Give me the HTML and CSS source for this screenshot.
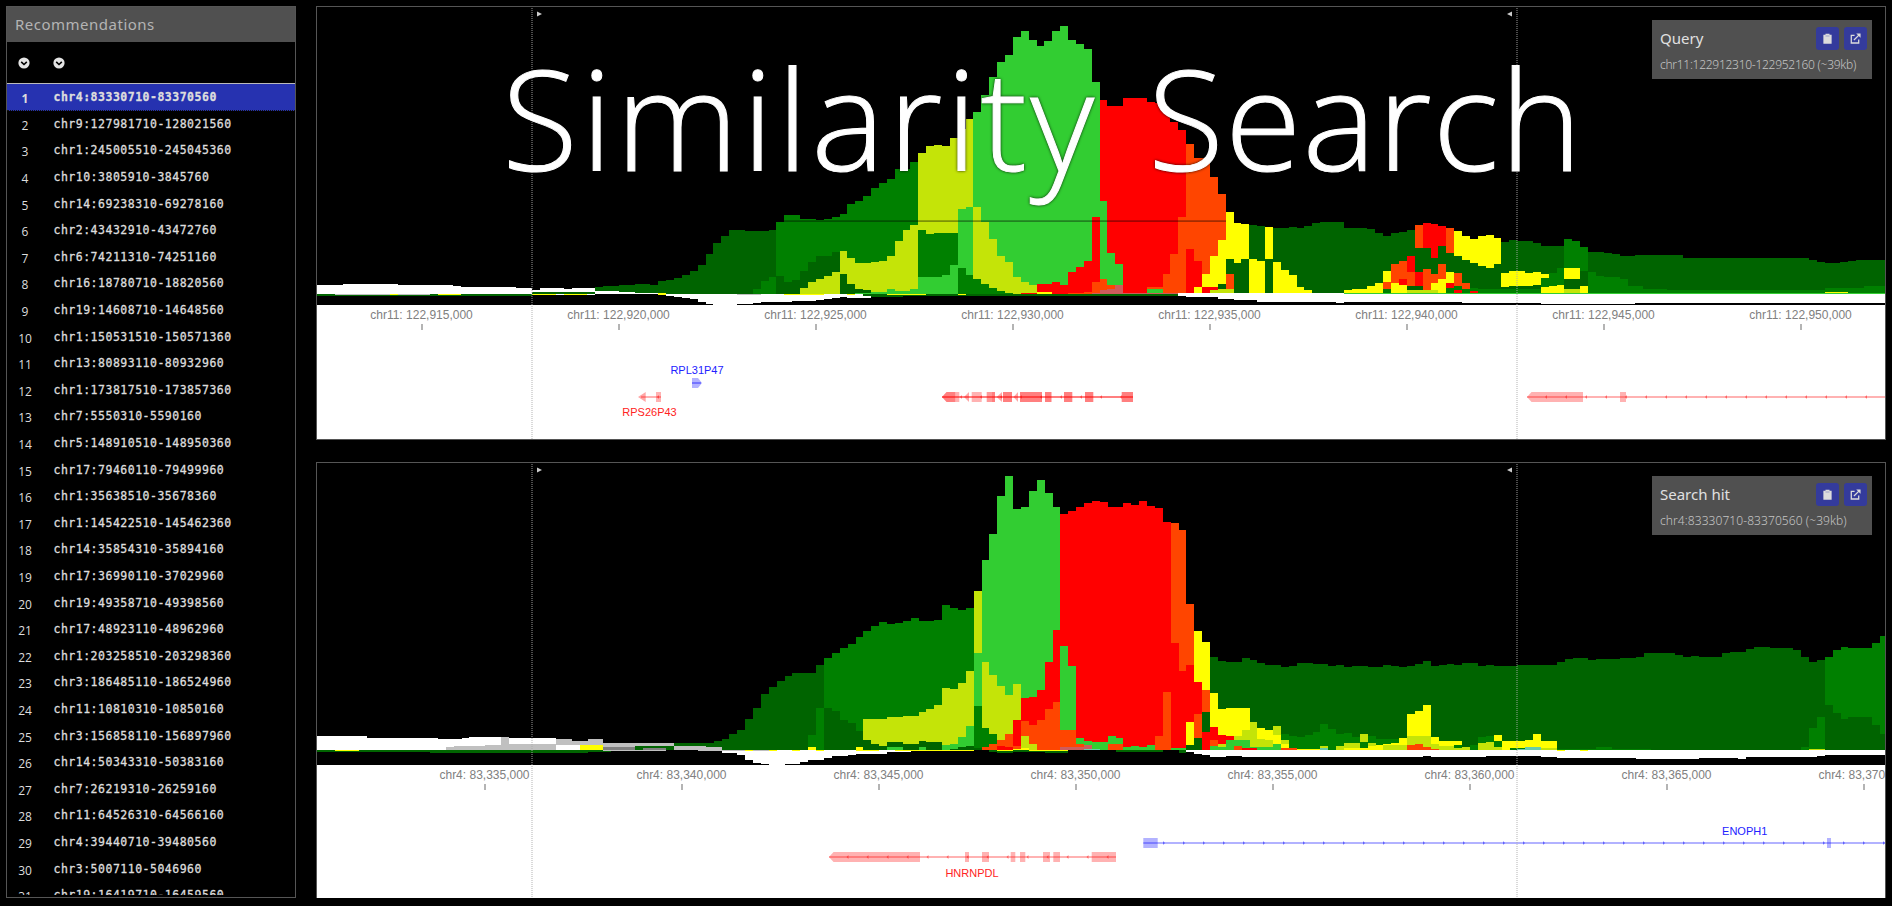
FILE: index.html
```
<!DOCTYPE html>
<html lang="en">
<head>
<meta charset="utf-8">
<title>Similarity Search</title>
<link rel="stylesheet" href="styles.css">
</head>
<body>
<div class="app">
  <aside class="sidebar">
    <h2 class="sidebar-title">Recommendations</h2>
    <div class="sort-row">
      <svg class="sort" viewBox="0 0 12 12"><circle cx="6" cy="6" r="5.6"/><path d="M3.2 4.8 6 7.5 8.8 4.8"/></svg>
      <svg class="sort" viewBox="0 0 12 12"><circle cx="6" cy="6" r="5.6"/><path d="M3.2 4.8 6 7.5 8.8 4.8"/></svg>
    </div>
    <div class="list" id="list"></div>
  </aside>
  <main class="panels">
    <section class="panel panel-query">
      <svg class="track" id="query" viewBox="317 7 1568 432"></svg>
      <div class="info">
        <div class="info-head">
          <span class="info-title">Query</span>
          <button class="btn"><svg viewBox="0 0 12 12"><path class="fill" d="M1.5 2h2.3V.8h4.4V2h2.3v9.6h-9z"/><path class="cut" d="M3.8 3.3h4.4"/></svg></button>
          <button class="btn"><svg viewBox="0 0 12 12"><path class="line" d="M5 2.5H1.4v8.4h8.1V7"/><path class="line" d="M4.3 7.7 10 2"/><path class="fill" d="M6.8.6h4.7v4.7z"/></svg></button>
        </div>
        <div class="info-sub sub-query">chr11:122912310-122952160 (~39kb)</div>
      </div>
    </section>
    <section class="panel panel-hit">
      <svg class="track" id="hit" viewBox="317 463 1568 435"></svg>
      <div class="info">
        <div class="info-head">
          <span class="info-title">Search hit</span>
          <button class="btn"><svg viewBox="0 0 12 12"><path class="fill" d="M1.5 2h2.3V.8h4.4V2h2.3v9.6h-9z"/><path class="cut" d="M3.8 3.3h4.4"/></svg></button>
          <button class="btn"><svg viewBox="0 0 12 12"><path class="line" d="M5 2.5H1.4v8.4h8.1V7"/><path class="line" d="M4.3 7.7 10 2"/><path class="fill" d="M6.8.6h4.7v4.7z"/></svg></button>
        </div>
        <div class="info-sub sub-hit">chr4:83330710-83370560 (~39kb)</div>
      </div>
    </section>
  </main>
</div>
<svg class="headline" viewBox="0 0 1892 240">
  <text x="502" y="170.5" textLength="592" lengthAdjust="spacing">Similarity</text>
  <text x="1148" y="170.5" textLength="434" lengthAdjust="spacing">Search</text>
</svg>
<script src="main.js"></script>
</body>
</html>
```
FILE: styles.css
```
* { box-sizing: border-box; }
body {
  margin: 0;
  background: #000;
  color: #ddd;
  font-family: "Noto Sans", "Open Sans", sans-serif;
  overflow: hidden;
}
.app {
  display: flex;
  gap: 20px;
  height: 906px;
  padding: 6px 6px 8px;
}
.sidebar {
  width: 290px;
  height: 892px;
  border: 1px solid #555;
  display: flex;
  flex-direction: column;
}
.sidebar-title {
  margin: 0;
  height: 35px;
  flex: none;
  padding-left: 8px;
  background: #505050;
  color: #b4b4b4;
  font-size: 15px;
  font-weight: 400;
  letter-spacing: 0.5px;
  line-height: 35px;
}
.sort-row {
  flex: none;
  height: 42px;
  padding: 15px 0 0 11px;
  border-bottom: 1px solid #bbb;
  display: flex;
  gap: 23px;
}
.sort { width: 12px; height: 12px; }
.sort circle { fill: #e4e4e4; }
.sort path { fill: none; stroke: #000; stroke-width: 1.6; }
.list { flex: 1; overflow: hidden; margin-bottom: 2px; }
.row {
  height: 26.6px;
  display: flex;
  align-items: center;
  font-size: 12.5px;
}
.row .rank {
  width: 36px;
  text-align: center;
  padding-top: 3px;
  flex: none;
  font-family: "Open Sans", "Noto Sans", sans-serif;
  font-size: 12px;
}
.row .region {
  margin-left: 10.5px;
  font-family: "DejaVu Sans Mono", monospace;
  font-size: 11.5px;
  letter-spacing: 0.5px;
  -webkit-text-stroke: 0.3px #ddd;
}
.row.active {
  background: #2632b0;
  font-weight: 700;
  border-bottom: 1px dotted #111;
}
.row.active .region { padding-top: 1px; }
.panels {
  display: flex;
  flex-direction: column;
  gap: 22px;
  width: 1570px;
}
.panel { position: relative; border: 1px solid #555; flex: none; }
.panel-query { height: 434px; }
.panel-hit { height: 436px; border-bottom: 0; }
.track { display: block; width: 1568px; height: 100%; background: #000; }
.axis-label { font: 12px "Liberation Sans", Arial, sans-serif; fill: #808080; text-anchor: middle; }
.gene-label { font: 11px "Liberation Sans", Arial, sans-serif; text-anchor: middle; }
.info {
  position: absolute;
  top: 13px;
  right: 13px;
  width: 220px;
  height: 59px;
  padding: 7px 5px 0 8px;
  background: #505050;
}
.info-head { display: flex; align-items: center; gap: 5px; height: 23px; }
.info-title { flex: 1; font-size: 15px; line-height: 20px; padding-bottom: 2px; color: #e0e0e0; }
.btn {
  width: 23px;
  height: 23px;
  padding: 0;
  border: 0;
  border-radius: 3px;
  background: #343b9c;
  display: flex;
  align-items: center;
  justify-content: center;
}
.btn svg { width: 11px; height: 11px; }
.fill { fill: #dcdcdc; }
.line { fill: none; stroke: #dcdcdc; stroke-width: 1.4; }
.cut { stroke: #8a8ec0; stroke-width: 0.8; }
.info-sub { margin-top: 6px; font-size: 12px; font-weight: 300; line-height: 18px; color: #c4c4c4; white-space: nowrap; }
.sub-query { letter-spacing: -0.27px; }
.sub-hit { letter-spacing: 0.08px; }
.headline {
  position: absolute;
  left: 0;
  top: 0;
  width: 1892px;
  height: 240px;
  pointer-events: none;
}
.headline text {
  font-family: "Open Sans", "Noto Sans", sans-serif;
  font-weight: 300;
  font-size: 139px;
  fill: #fff;
  stroke: #fff;
  stroke-width: 1px;
  filter: drop-shadow(0 0 1.5px rgba(0, 0, 0, 0.8));
}
```
FILE: main.js
```
const NS = 'http://www.w3.org/2000/svg';
const BIN = 7.88;
const COLORS = {
  d: '#006400', g: '#008000', y: '#c4e408', l: '#32cd32', r: '#ff0000',
  o: '#ff4500', Y: '#ffff00', W: '#ffffff', s: '#c0c0c0', k: '#808080',
  p: '#cd5c5c', t: '#66cdaa'
};

const regions = `chr4:83330710-83370560 chr9:127981710-128021560 chr1:245005510-245045360
chr10:3805910-3845760 chr14:69238310-69278160 chr2:43432910-43472760 chr6:74211310-74251160
chr16:18780710-18820560 chr19:14608710-14648560 chr1:150531510-150571360 chr13:80893110-80932960
chr1:173817510-173857360 chr7:5550310-5590160 chr5:148910510-148950360 chr17:79460110-79499960
chr1:35638510-35678360 chr1:145422510-145462360 chr14:35854310-35894160 chr17:36990110-37029960
chr19:49358710-49398560 chr17:48923110-48962960 chr1:203258510-203298360 chr3:186485110-186524960
chr11:10810310-10850160 chr3:156858110-156897960 chr14:50343310-50383160 chr7:26219310-26259160
chr11:64526310-64566160 chr4:39440710-39480560 chr3:5007110-5046960 chr19:16419710-16459560`.split(/\s+/);

const list = document.getElementById('list');
regions.forEach((r, i) => {
  const row = document.createElement('div');
  row.className = 'row' + (i ? '' : ' active');
  row.innerHTML = `<span class="rank">${i + 1}</span><span class="region">${r}</span>`;
  list.appendChild(row);
});

function add(svg, tag, attrs, text) {
  const el = document.createElementNS(NS, tag);
  for (const a in attrs) el.setAttribute(a, attrs[a]);
  if (text) el.textContent = text;
  svg.appendChild(el);
}

// Each band line: colour, first bin, then levels in thirds of a pixel ("n*count" repeats a level).
function drawBands(svg, t, text, base) {
  text.trim().split('\n').forEach(line => {
    const [c, start, ...vals] = line.trim().split(/\s+/);
    let k = +start, d = '';
    vals.forEach(v => {
      const [lv, n] = v.split('*').map(Number);
      const m = n || 1;
      const x1 = (t.x0 + k * BIN).toFixed(2);
      const x2 = (t.x0 + (k + m) * BIN).toFixed(2);
      d += `M${x1} ${(t.y0 + lv / 3).toFixed(2)}H${x2}V${(t.y0 + base / 3).toFixed(2)}H${x1}Z`;
      k += m;
    });
    add(svg, 'path', { d, fill: COLORS[c], 'shape-rendering': 'crispEdges' });
  });
}

function frame(svg, t) {
  add(svg, 'rect', { x: 317, y: t.axis, width: 1568, height: 140, fill: '#fff' });
  t.labels.forEach((label, i) => {
    const x = t.tick0 + i * 197;
    add(svg, 'text', { x: x - 0.5, y: t.axis + 14, class: 'axis-label' }, label);
    add(svg, 'rect', { x: x - 1, y: t.axis + 19, width: 2, height: 6, fill: '#b4b4b4' });
  });
}

function markers(svg, top, bottom) {
  [532, 1517].forEach(x => add(svg, 'path', {
    d: `M${x} ${top + 1}V${bottom}`, stroke: '#aaa', 'stroke-opacity': 0.45, 'stroke-width': 2, 'stroke-dasharray': '1 1'
  }));
  add(svg, 'path', { d: `M537 ${top + 4.5}v5l5-2.5z`, fill: '#ccc' });
  add(svg, 'path', { d: `M1512 ${top + 4.5}v5l-5-2.5z`, fill: '#ccc' });
}

function box(svg, x1, x2, y, color, op) {
  add(svg, 'rect', { x: x1, y: y - 5, width: x2 - x1, height: 10, fill: color, 'fill-opacity': op || 0.3 });
}
function tip(svg, x1, x2, y, color, op) {
  add(svg, 'path', { d: `M${x1} ${y}L${x1 + 4.5} ${y - 5}H${x2}V${y + 5}H${x1 + 4.5}Z`, fill: color, 'fill-opacity': op || 0.3 });
}
function tri(svg, x1, x2, y, color) {
  add(svg, 'path', { d: `M${x1} ${y}L${x2} ${y - 5}V${y + 5}Z`, fill: color, 'fill-opacity': 0.35 });
}
function spine(svg, x1, x2, y, color, op) {
  add(svg, 'rect', { x: x1, y: y - 1, width: x2 - x1, height: 2, fill: color, 'fill-opacity': op || 0.3 });
}
function chevrons(svg, x1, x2, y, color, dir) {
  for (let x = x1; x < x2; x += 20) {
    add(svg, 'path', { d: `M${x - dir} ${y - 2}L${x + dir} ${y}L${x - dir} ${y + 2}Z`, fill: color, 'fill-opacity': 0.45 });
  }
}
function geneLabel(svg, x, y, color, s) {
  add(svg, 'text', { x, y, class: 'gene-label', fill: color }, s);
}

/* ---------- query ---------- */
const query = document.getElementById('query');
const q = {
  x0: 343.06, y0: 10, axis: 305, tick0: 422,
  labels: ['915', '920', '925', '930', '935', '940', '945', '950'].map(n => `chr11: 122,${n},000`)
};
drawBands(query, q, `
W -4 824*4 822*7 824*7 827 830*7 833*2 839 834*3 837 834*3
d 24 846*8 832 829*2 826*2 822*2 825 814 810 804 796 783 766 733 700 677 659*2 663*3 661
g 55 635 616*2 626*2 631 626 620 611 581 572 557 533 518 506 478*2 455
y 73 428 407 404 409 383 356 328
l 80 305 256 201 156 135 82 63 91 108 93 63 48 91 102 117 216
r 96 271 287*2 265*3 275 280 300 335 360
o 107 402 445*2 502 553
Y 112 605 638 643
d 115 645 647
Y 117 650
d 118 653 655 651 653 649 639 635*3 653*3 657 668 679 668 667 659
o 136 644
r 137 638 641 647
o 140 653
Y 141 664 679 688 679 674 683
d 147 695 690 694 692 698 707*3
g 155 688 692 710
d 158 727*2 729 733 739*2 736*6 743 745*15 751 755 760 758 757 754 749 751 749 751
g 52 838 813 801
d 55 797 815 811 783 757 739*2 727
y 58 834 816 808 799 787 723 744 759*2 757 754 739 693 661 645
d 63 792 822 837 840 846*2
l 65 848*2 847*2 838 843*2 837
g 73 660 673 670*3
l 73 801*3 795 766 597 591
g 78 774 795
y 80 591 635 687 738 755 801 817 826
g 80 807 822 834 843 848
r 86 850 848 822*2 816 825 786 771 754 622
o 92 849*2 846 817
Y 88 847*2
l 96 574 730 761
o 96 808 826
p 95 850 840 838 824
o 102 831*2
l 102 838*2
o 104 791 731 620
p 99 848*8
r 107 717 752
Y 108 832 791 737 691
r 109 830*2
d 111 822
y 110 840 837
d 112 746 758 748
o 112 791
y 112 837
Y 115 747 753
d 117 747
Y 118 755 780 795 832 841
Y 127 840 836*2 829 818 782
o 132 815 761 754
g 132 838
Y 133 818 824
r 134 808 739
Y 134 824
o 135 787
d 135 828
d 136 714
r 136 787
d 136 829
d 137 715 745 708 730 739 749 759 769 773 761
o 137 778 793 761
Y 138 820 808 787
r 140 820
g 140 834
o 141 790 820
g 141 829 836 834 836*3
r 141 840
r 143 844
y 135 840*4
Y 147 788 783*2 789 785 791
d 147 832 828*3 825 824
g 147 836*5
g 152 805 790 775
Y 152 830 827 824
Y 155 775*2
d 155 808*2 782
y 155 838*2
Y 157 827 844
g 158 787 797 800*2 807 829*2 838*3 840*20 834*5 829*3
Y 188 847*3
W 32 842*3 845*2 849*3
l 127 849*69
`, 853);
// below the baseline
drawBands(query, q, `
d -4 857*28
s -1 855*12
d -4 857*3
W 24 856*8
Y 6 856
Y 12 856*3
Y 24 856*3
Y 28 856*3
W 40 856 859 862 864 867 875 882 885*3 882*2 879 876*4 873*3 870 867 864 861 864*3 860*4
d 66 859 862*4 857*36
W 106 858*1 860 862*3 866*2 870*3 875*10 878 875*15 878*10 882*12 878*32
`, 853);
drawBands(query, q, `
Y 40 850
Y 56 851*5
Y 64 851
Y 69 851*5
Y 78 851
s 50 851*3
W 106 850*21
`, 855);
add(query, 'rect', { x: 777, y: 220.3, width: 449, height: 1.6, fill: '#000', 'fill-opacity': 0.4 });
frame(query, q);
geneLabel(query, 697, 374, '#22f', 'RPL31P47');
geneLabel(query, 649.5, 416, '#f22', 'RPS26P43');
add(query, 'path', { d: 'M692 378h6l4 5-4 5h-6z', fill: '#00f', 'fill-opacity': 0.3 });
spine(query, 692, 701, 383, '#00f', 0.35);
const qy = 397;
tri(query, 638, 645.7, qy, '#f00');
spine(query, 641, 661, qy, '#f00');
box(query, 656, 661, qy, '#f00');
chevrons(query, 658, 660, qy, '#f00', -1);
spine(query, 942, 1133, qy, '#f00', 0.5);
tip(query, 942, 955.3, qy, '#f00', 0.5);
box(query, 955.3, 959.3, qy, '#f00');
tri(query, 964, 969, qy, '#f00');
box(query, 971.7, 981.7, qy, '#f00');
box(query, 986.7, 992, qy, '#f00', 0.4);
box(query, 992, 995, qy, '#f00', 0.5);
tri(query, 996.7, 1002, qy, '#f00');
box(query, 1003, 1012, qy, '#f00', 0.5);
tri(query, 1013.5, 1018, qy, '#f00');
[[1020, 1042], [1045, 1051.5], [1064, 1072.3], [1085, 1093.3], [1121.7, 1133]].forEach(b => box(query, b[0], b[1], qy, '#f00', 0.5));
chevrons(query, 961, 1133, qy, '#f00', -1);
tip(query, 1527, 1583, qy, '#f00');
box(query, 1620, 1626, qy, '#f00');
spine(query, 1527, 1885, qy, '#f00');
chevrons(query, 1546, 1885, qy, '#f00', -1);
markers(query, 7, 439);

/* ---------- search hit ---------- */
const hit = document.getElementById('hit');
const h = {
  x0: 824, y0: 460, axis: 765, tick0: 485,
  labels: ['335', '340', '345', '350', '355', '360', '365', '370'].map(n => `chr4: 83,${n},000`)
};
drawBands(hit, h, `
W -65 828*7 835*9 838*3 835 831*4
s -41 831
W -40 835*6
s -34 837*2 842*2 837*2 850*9
s -48 861 858*4 856*3
s -40 853*6
W -34 855*3 866*3
Y -31 856*3
k -28 862*4
d -24 858*5
k -23 864*3
d -19 850*5 842 838 823 810 777 744 702 681 663 648 639*3 615
s -19 858*4 862*2
g 0 594 579 564 552 531 513 498 486 492 489 483 474 483*2 480 435 444 450 444
y 19 393
l 20 300 222 108 48 147 141 93 60 99 141
r 30 162 153 141 129 123 126 141*2 129 135 123 138 144 186
o 44 189 210 432
Y 47 513 546
d 49 591 603 606*2 594 600 609 615*2 621 618 609*2 612*2 618 615 621 618*2 621*2 615 618 621 618 612 603 618 615 612 615 609*2 618 615 618*3 615*5 606 597 594*2 600 597*3 594*2 591 580*4 584 592 589 592*3 578 575*2 567 560*2 563*3 570 592 606 600
g 127 590 570 560 563*3 550 527
g -2 826 744
d 0 744 754 780 790 813
y 5 777*3 771*2 768*2 756 747 735 684 687 669 633
d 5 840 852 858 846*2 852*2 843 846*2
l 8 861*2
l 12 861
l 15 855 852 831 798
d 16 866 861 858
Y -2 861
Y 4 861
l 19 579
g 19 738
d 19 864
y 20 606 645 678 705 672
g 20 804 822
o 20 861 852 840 822
r 22 858 861 780
o 24 858
r 25 714 711 690 606 510
o 25 783 795 780 747 726
y 25 828 852
Y 24 867 864
l 30 558 618
o 30 810*2
l 32 834 843 846*2 828 834 861 858 861 855 861*3 864*2
o 32 852
p 30 861*3 855
t 33 867*2
o 36 852*2
o 42 828 696
r 44 549 633 615 666
l 44 864*2
Y 46 786
d 46 855
o 47 762
d 47 834
o 48 690
d 48 756
r 48 816
Y 49 699 747 744*3
r 49 801 825 828
o 49 840
y 50 852
y 52 828 810 786
l 49 858 862 840*3 861
o 52 858
r 53 864*4
Y 55 804 810
y 55 837 840
y 57 798
Y 57 825
l 55 861*2 852
g 58 822 828 831 825 816 792 807 822 819 831 822 828 837*4
y 58 840
Y 58 852
o 58 864*2
Y 60 867*4
y 63 858
t 63 864
y 65 858 849*2 822 849
g 68 846
Y 66 864*3 858 855 852 849 834 762 753 735 831 843*3
y 71 855*3 828*3 852 858*2
o 74 855 852 861 867
g 80 855
y 80 864 861*2
g 82 855 831 828
y 83 849 846
Y 85 825
g 85 843
y 85 861
Y 86 843*3 840 822 843*2
g 87 864*2
t 88 867
t 89 861*2
y 91 864*2
g 93 866*5 861*2 866*5
g 124 862 804 770
d 127 734 758 778 770*3 795 822
y 125 868*2
`, 871);
drawBands(hit, h, `
s -65 873*21
d -65 876*15 878*20 876*3
Y -62 873*3
s -28 872*8
W -14 874 878*2 885 900 909 912 915*2 912*2 906 900*2 894 888*2 886 882*4 876*3
s -16 874*10
Y 9 873*10
d 21 876 880*2 876*4 879*3
d 37 876*6
d 45 879
W 46 876 882 885 891*2 888*2 891*23 888 891*7 888*7 891*2 894*10 897*8 894*5 897 891*9 888 885*8
`, 870);
drawBands(hit, h, `
Y -10 870
Y -7 870
Y -4 870
Y -1 870
Y 4 870*3
Y 15 870*4
Y 22 870*2
Y 26 870*5
Y 93 869
Y 96 869
`, 873);
frame(hit, h);
geneLabel(hit, 972, 876.5, '#f22', 'HNRNPDL');
geneLabel(hit, 1744.7, 834.5, '#22f', 'ENOPH1');
spine(hit, 829, 1116, 857, '#f00');
tip(hit, 829, 920, 857, '#f00');
[[965, 969], [982, 989], [1010.7, 1015.3], [1020, 1025.3], [1043, 1050], [1053.3, 1060], [1091.7, 1116]].forEach(b => box(hit, b[0], b[1], 857, '#f00'));
chevrons(hit, 847.5, 1116, 857, '#f00', -1);
box(hit, 1143.3, 1157.7, 843, '#00f');
box(hit, 1827, 1831, 843, '#00f');
spine(hit, 1143.3, 1885, 843, '#00f');
chevrons(hit, 1164, 1885, 843, '#00f', 1);
markers(hit, 463, 898);
```
